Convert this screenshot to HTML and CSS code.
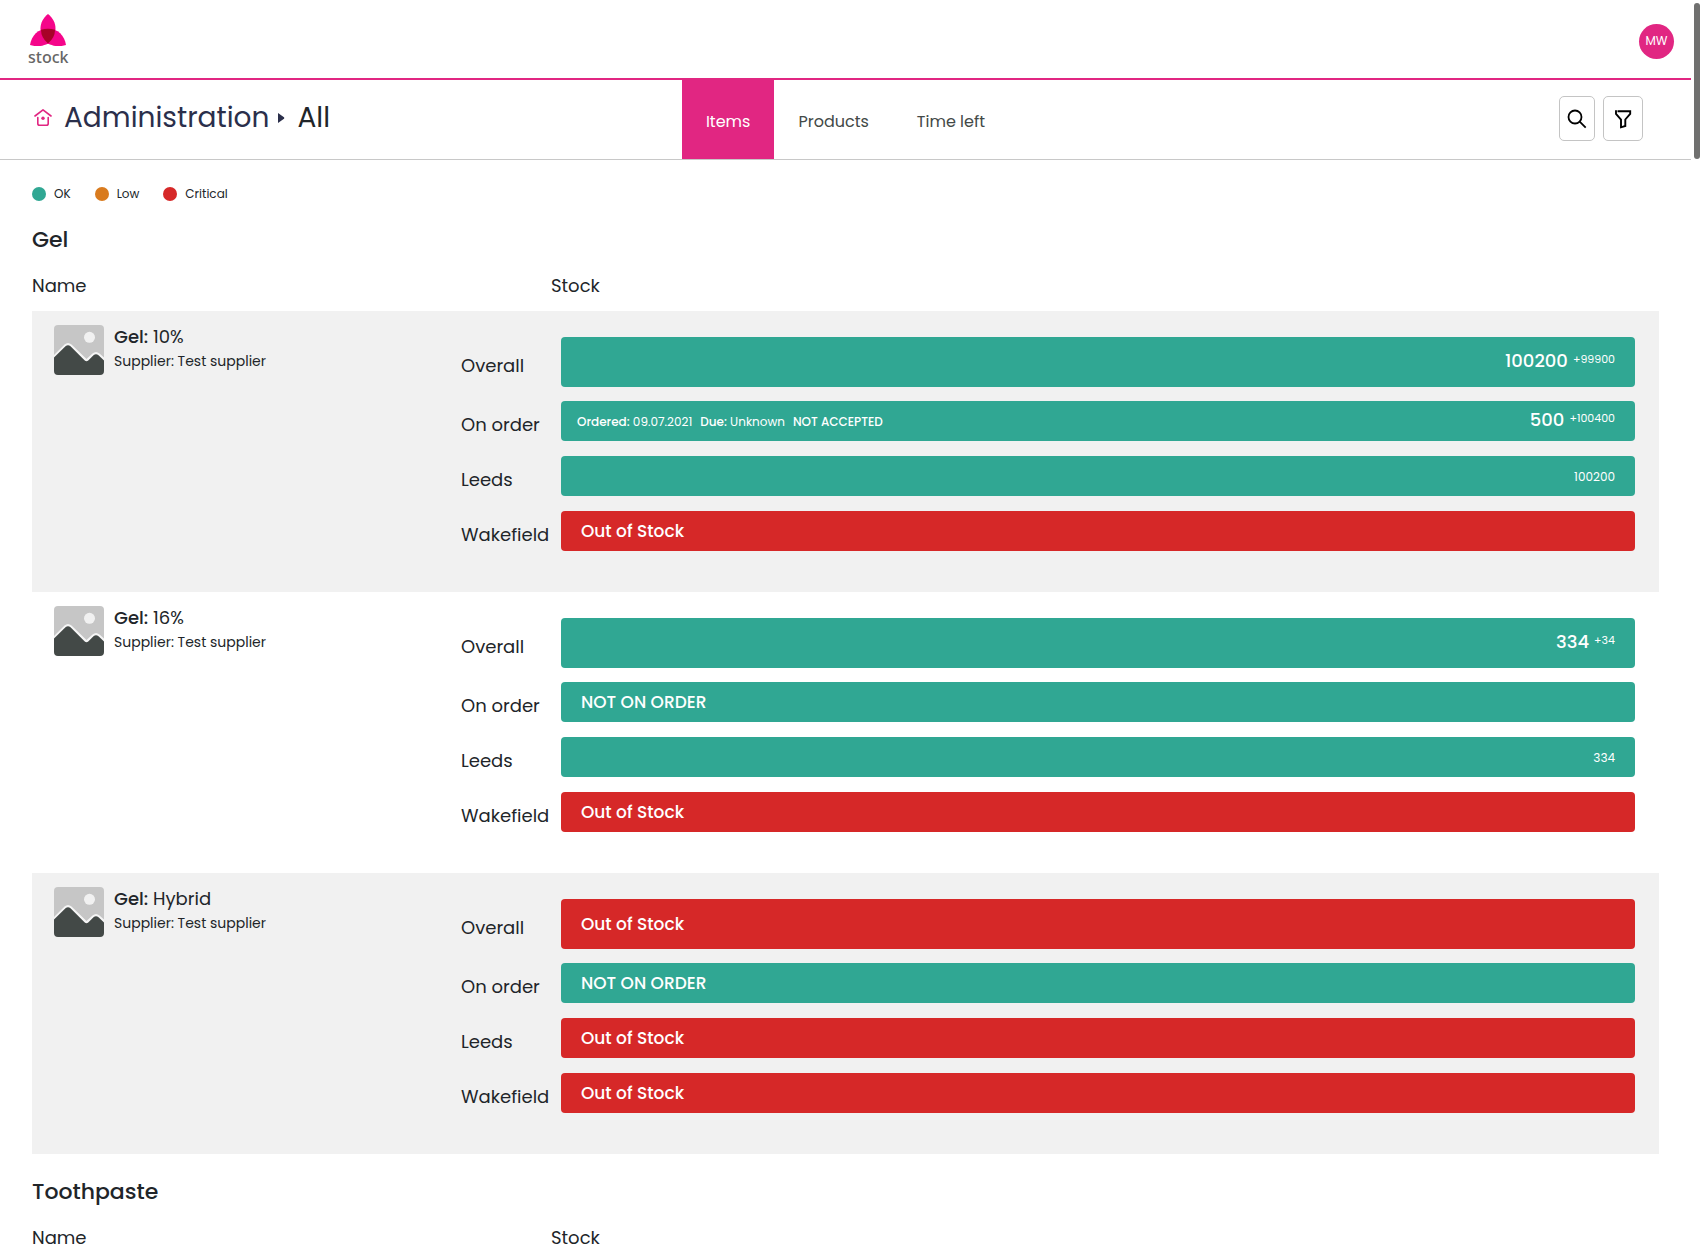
FILE: index.html
```html
<!DOCTYPE html>
<html lang="en">
<head>
<meta charset="utf-8">
<meta name="viewport" content="width=device-width, initial-scale=1">
<title>Stock – Administration</title>
<link rel="stylesheet" href="styles.css">
</head>
<body>
<svg class="defs" width="0" height="0" aria-hidden="true">
  <symbol id="photo" viewBox="0 0 50 50">
    <path fill="#c6c6c6" d="M0 4a4 4 0 0 1 4-4h42a4 4 0 0 1 4 4v42H0z"/>
    <circle cx="35.500" cy="12.300" r="5.500" fill="#f1f1f1"/>
    <path fill="#f5f5f5" d="M0 30 10.500 19.500Q14 16.500 17.500 19.500L32.500 34 38.500 28.500Q42 25.500 45.500 28.500L50 32.500V40H0z"/>
    <path fill="#434947" d="M0 32.500 11.500 21.300Q14 19 16.500 21.300L30.500 35.300Q32.500 37 34.500 35.300L39.500 30.300Q42 28 44.500 30.300L50 35.500V46a4 4 0 0 1-4 4H4a4 4 0 0 1-4-4z"/>
  </symbol>
</svg>

<header class="topbar">
  <a class="logo" href="#">
    <svg width="36" height="32" viewBox="0 0 36 32" aria-hidden="true">
      <g fill="#f5058a">
        <path d="M18 0C23 4 25.500 9 25.500 14.500 25.500 21 22.500 26.500 18 30 13.500 26.500 10.500 21 10.500 14.500 10.500 9 13 4 18 0z"/>
        <path d="M0 31C1.500 21.500 8 14.800 18 14.800H24.800C24.800 21 22.500 26.500 18 29.500 12.500 32.500 6 33 0 31z"/>
        <path d="M36 31C34.500 21.500 28 14.800 18 14.800H11.200C11.200 21 13.500 26.500 18 29.500 23.500 32.500 30 33 36 31z"/>
      </g>
      <path fill="#a80228" d="M11 15.700Q18 13.700 25 15.700 25 23.500 18 29.500 11 23.500 11 15.700z"/>
    </svg>
    <span>stock</span>
  </a>
  <button class="avatar" type="button">MW</button>
</header>

<div class="subbar">
  <h1 class="crumbs">
    <a class="home" href="#" aria-label="Home">
      <svg width="18" height="18" viewBox="0 0 18 18" fill="none" stroke="#e12682" stroke-width="1.600" stroke-linecap="round" stroke-linejoin="round">
        <path d="M1 7 9 .9 17 7M3.800 8.500V14.500Q3.800 16.300 5.600 16.300H12.400Q14.200 16.300 14.200 14.500V8.500"/>
        <circle cx="9" cy="9.200" r="1.700" fill="#e12682" stroke="none"/>
      </svg>
    </a>
    <a class="crumb-link" href="#">Administration</a>
    <svg class="arrow" width="7" height="10" viewBox="0 0 7 10" aria-hidden="true"><path fill="#2b2f4b" d="M0 0 6 4.300Q6.600 5 6 5.700L0 10z"/></svg>
    <span>All</span>
  </h1>
  <nav class="tabs">
    <a class="tab active" href="#">Items</a>
    <a class="tab" href="#">Products</a>
    <a class="tab" href="#">Time left</a>
  </nav>
  <div class="tools">
    <button class="tool search" type="button" aria-label="Search">
      <svg width="20" height="20" viewBox="0 0 20 20" fill="none" stroke="#000" stroke-width="1.800"><circle cx="8" cy="8" r="6.500"/><path d="M12.700 12.700 18.700 18.700"/></svg>
    </button>
    <button class="tool filter" type="button" aria-label="Filter">
      <svg width="18" height="20" viewBox="0 0 18 20" fill="none" stroke="#000" stroke-width="1.900"><path d="M3.500 2.200H16.200V4.800L11.300 10.500V17L7 18.300V10.500L2 4.800V1.300"/></svg>
    </button>
  </div>
</div>

<main class="content">
  <ul class="legend">
    <li class="ok">OK</li>
    <li class="low">Low</li>
    <li class="critical">Critical</li>
  </ul>

  <section>
    <h2>Gel</h2>
    <table class="stock">
      <thead><tr><th class="name-col" scope="col">Name</th><th class="stock-col" scope="col">Stock</th></tr></thead>
      <tbody>
        <tr>
          <td>
            <div class="item">
              <svg width="50" height="50" aria-hidden="true"><use href="#photo"/></svg>
              <div><p class="item-name"><b>Gel:</b> 10%</p><p class="supplier">Supplier: Test supplier</p></div>
            </div>
          </td>
          <td>
            <dl class="levels">
              <dt>Overall</dt><dd class="bar tall ok"><span class="count"><b>100200</b><small>+99900</small></span></dd>
              <dt>On order</dt><dd class="bar order ok"><span class="details"><span><b>Ordered:</b> 09.07.2021</span><span><b>Due:</b> Unknown</span><b>NOT ACCEPTED</b></span><span class="count"><b>500</b><small>+100400</small></span></dd>
              <dt>Leeds</dt><dd class="bar ok"><span class="site">100200</span></dd>
              <dt>Wakefield</dt><dd class="bar critical"><b>Out of Stock</b></dd>
            </dl>
          </td>
        </tr>
        <tr>
          <td>
            <div class="item">
              <svg width="50" height="50" aria-hidden="true"><use href="#photo"/></svg>
              <div><p class="item-name"><b>Gel:</b> 16%</p><p class="supplier">Supplier: Test supplier</p></div>
            </div>
          </td>
          <td>
            <dl class="levels">
              <dt>Overall</dt><dd class="bar tall ok"><span class="count"><b>334</b><small>+34</small></span></dd>
              <dt>On order</dt><dd class="bar ok"><b>NOT ON ORDER</b></dd>
              <dt>Leeds</dt><dd class="bar ok"><span class="site">334</span></dd>
              <dt>Wakefield</dt><dd class="bar critical"><b>Out of Stock</b></dd>
            </dl>
          </td>
        </tr>
        <tr>
          <td>
            <div class="item">
              <svg width="50" height="50" aria-hidden="true"><use href="#photo"/></svg>
              <div><p class="item-name"><b>Gel:</b> Hybrid</p><p class="supplier">Supplier: Test supplier</p></div>
            </div>
          </td>
          <td>
            <dl class="levels">
              <dt>Overall</dt><dd class="bar tall critical"><b>Out of Stock</b></dd>
              <dt>On order</dt><dd class="bar ok"><b>NOT ON ORDER</b></dd>
              <dt>Leeds</dt><dd class="bar critical"><b>Out of Stock</b></dd>
              <dt>Wakefield</dt><dd class="bar critical"><b>Out of Stock</b></dd>
            </dl>
          </td>
        </tr>
      </tbody>
    </table>
  </section>

  <section>
    <h2>Toothpaste</h2>
    <table class="stock">
      <thead><tr><th class="name-col" scope="col">Name</th><th class="stock-col" scope="col">Stock</th></tr></thead>
    </table>
  </section>
</main>
<div class="scroll-thumb" aria-hidden="true"></div>
</body>
</html>
```

FILE: styles.css
```css
* { box-sizing: border-box; }

:root {
  --pink: #e12682;
  --teal: #30a793;
  --red: #d62828;
  --orange: #d97b1e;
  --ink: #212529;
}

body {
  margin: 0;
  padding-right: 12px;
  background: #fff;
  color: var(--ink);
  font-family: Poppins, Inter, sans-serif;
  font-size: 18px;
  line-height: 28px;
}

a { color: inherit; text-decoration: none; }
b { font-weight: 500; }
h1, h2, p, ul, dl, dd { margin: 0; padding: 0; }
button { font: inherit; padding: 0; }
svg { display: block; flex: none; }
.defs { position: absolute; }

/* Top bar */
.topbar {
  display: flex;
  justify-content: space-between;
  align-items: center;
  height: 80px;
  padding: 4px 17px 0 28px;
  border-bottom: 2px solid var(--pink);
}
.logo {
  display: flex;
  flex-direction: column;
  align-items: center;
  color: #666;
  font-family: "Noto Sans", sans-serif;
  font-size: 16px;
  font-weight: 500;
  line-height: 22px;
}
.avatar {
  width: 35px;
  height: 35px;
  border: 0;
  border-radius: 50%;
  background: var(--pink);
  color: #fff;
  font-size: 12px;
}

/* Breadcrumbs, tabs and tools */
.subbar {
  display: grid;
  grid-template-columns: 1fr auto 1fr;
  height: 80px;
  padding: 0 48px 0 34px;
  border-bottom: 1px solid #c8c8c8;
}
.crumbs {
  display: flex;
  align-items: center;
  padding-bottom: 4px;
  font-size: 28px;
  font-weight: 400;
}
.crumb-link { margin-left: 12px; color: #2b2f4b; }
.arrow { margin: 0 12px 0 9px; }
.tabs { display: flex; margin-right: -14px; }
.tab {
  padding: 28px 24px 0;
  color: #434947;
  font-size: 16px;
}
.tab.active { background: var(--pink); color: #fff; }
.tools {
  display: flex;
  justify-content: flex-end;
  gap: 8px;
  padding-top: 16px;
}
.tool {
  display: flex;
  align-items: center;
  justify-content: center;
  width: 36px;
  height: 45px;
  border: 1px solid #c4c4c4;
  border-radius: 5px;
  background: #fff;
}
.tool.filter { width: 40px; }

/* Content */
.content { padding: 24px 32px 0; }
.legend {
  display: flex;
  gap: 24px;
  list-style: none;
  font-size: 12px;
  line-height: 20px;
}
.legend li { display: flex; align-items: center; gap: 8px; }
.legend li::before {
  content: "";
  width: 14px;
  height: 14px;
  border-radius: 50%;
  background: var(--teal);
}
.legend .low::before { background: var(--orange); }
.legend .critical::before { background: var(--red); }

section + section { padding-top: 2px; }
h2 {
  padding-top: 22px;
  font-size: 22px;
  font-weight: 500;
  line-height: 28px;
}

.stock {
  width: 100%;
  border-collapse: collapse;
  table-layout: fixed;
}
.stock th {
  padding: 18px 0 11px;
  font-weight: 400;
  text-align: left;
}
.name-col { width: 429px; }
.stock th.stock-col { padding-left: 90px; }
.stock td { padding: 0; vertical-align: top; }
.stock tbody tr:nth-child(odd) { background: #f1f1f1; }

.item { display: flex; gap: 10px; padding: 14px 22px; }
.item-name { line-height: 24px; }
.supplier { font-size: 14px; line-height: 24px; }

.levels {
  display: grid;
  grid-template-columns: 100px 1fr;
  row-gap: 15px;
  padding: 26px 24px 41px 0;
}
.levels dt { align-self: center; padding-top: 8px; }
.bar {
  display: flex;
  align-items: center;
  min-height: 40px;
  padding: 0 20px;
  border-radius: 4px;
  background: var(--teal);
  color: #fff;
  font-size: 17px;
}
.bar.tall { min-height: 50px; margin-bottom: -1px; }
.bar.critical { background: var(--red); }
.bar.order { padding-left: 16px; }
.details, .site { padding-top: 2px; font-size: 12px; }
.details { display: flex; gap: 8px; }
.count { display: flex; gap: 5px; margin-left: auto; padding-bottom: 3px; font-size: 18px; line-height: 24px; }
.count small { font-size: 11px; line-height: 20px; }
.site { margin-left: auto; }

.scroll-thumb {
  position: fixed;
  top: 3px;
  right: 3px;
  width: 6px;
  height: 156px;
  border-radius: 3px;
  background: #70706f;
}
```
